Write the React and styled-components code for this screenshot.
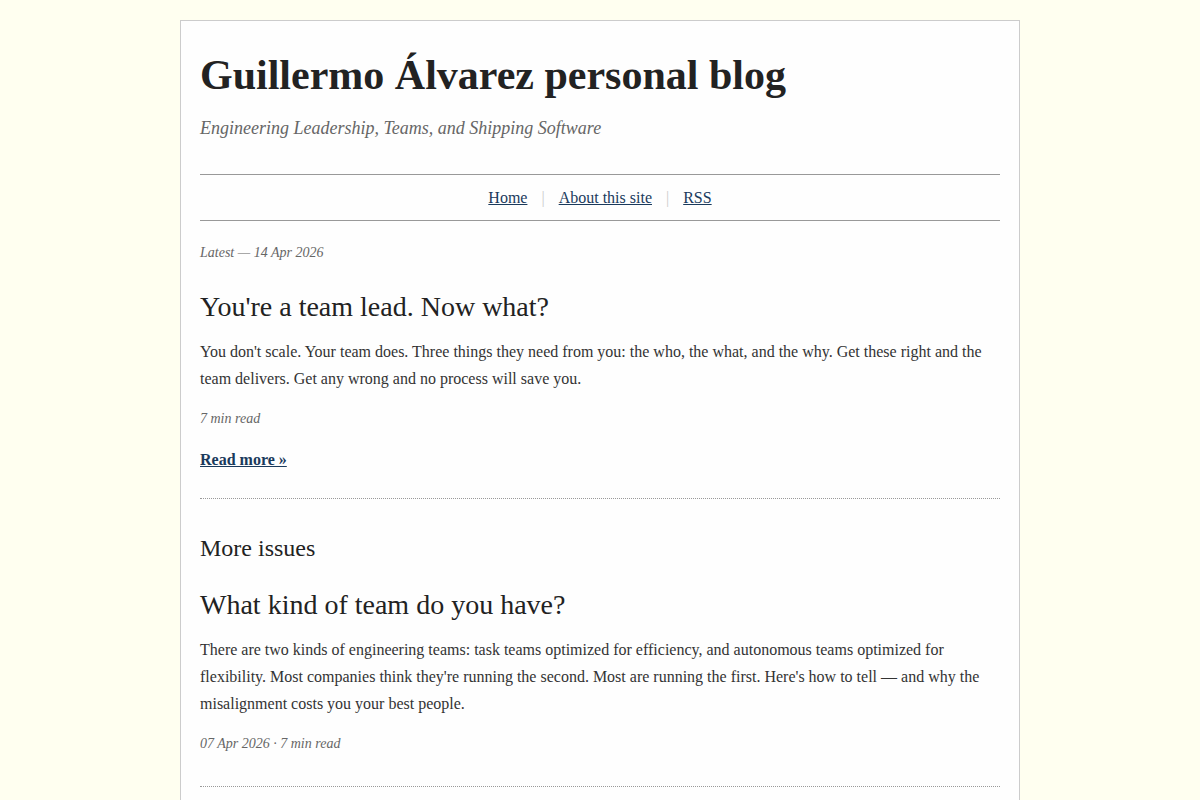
import React from "react";
import styled, { createGlobalStyle } from "styled-components";

const GlobalStyle = createGlobalStyle`
  html, body {
    margin: 0;
    padding: 0;
    background: #fffff0;
  }
  body {
    font-family: "Liberation Serif", "Times New Roman", serif;
    color: #333;
  }
`;

const posts = [
  {
    id: "team-lead",
    title: "You're a team lead. Now what?",
    excerpt:
      "You don't scale. Your team does. Three things they need from you: the who, the what, and the why. Get these right and the team delivers. Get any wrong and no process will save you.",
    meta: "7 min read",
    featured: true,
  },
  {
    id: "team-kind",
    title: "What kind of team do you have?",
    excerpt:
      "There are two kinds of engineering teams: task teams optimized for efficiency, and autonomous teams optimized for flexibility. Most companies think they're running the second. Most are running the first. Here's how to tell — and why the misalignment costs you your best people.",
    meta: "07 Apr 2026 · 7 min read",
  },
];

function Post({ post }) {
  return (
    <Article $featured={post.featured}>
      <PostTitle $featured={post.featured}>{post.title}</PostTitle>
      <Excerpt>{post.excerpt}</Excerpt>
      <Meta>{post.meta}</Meta>
      {post.featured && <ReadMore href="#">Read more »</ReadMore>}
    </Article>
  );
}

export default function App() {
  const [latest, ...rest] = posts;
  return (
    <>
      <GlobalStyle />
      <Sheet>
        <Header>
          <SiteTitle>Guillermo Álvarez personal blog</SiteTitle>
          <Tagline>Engineering Leadership, Teams, and Shipping Software</Tagline>
        </Header>
        <Nav>
          <NavLink href="#">Home</NavLink>
          <Sep>|</Sep>
          <NavLink href="#">About this site</NavLink>
          <Sep>|</Sep>
          <NavLink href="#">RSS</NavLink>
        </Nav>
        <main>
          <Latest>Latest — 14 Apr 2026</Latest>
          <Post post={latest} />
          <SectionHeading>More issues</SectionHeading>
          {rest.map((p) => (
            <Post key={p.id} post={p} />
          ))}
        </main>
      </Sheet>
    </>
  );
}

const Sheet = styled.div`
  box-sizing: border-box;
  width: 840px;
  margin: 20px auto 0;
  padding: 29px 19px 40px;
  background: #fefefe;
  border: 1px solid #ccc;
`;

const Header = styled.header`
  display: flex;
  flex-direction: column;
`;

const SiteTitle = styled.h1`
  margin: 0;
  font-size: 42px;
  line-height: 1.2;
  font-weight: bold;
  color: #222;
`;

const Tagline = styled.p`
  margin: 16px 0 0;
  font-size: 18px;
  line-height: 1.4;
  font-style: italic;
  color: #666;
`;

const Nav = styled.nav`
  margin-top: 32px;
  padding: 9px 0 8px;
  border-top: 1px solid #999;
  border-bottom: 1px solid #999;
  text-align: center;
  font-size: 16px;
  line-height: 28px;
`;

const NavLink = styled.a`
  color: #1a3a5c;
  text-decoration: underline;
`;

const Sep = styled.span`
  margin: 0 14px;
  color: #ccc;
`;

const Latest = styled.p`
  margin: 20px 0 0;
  font-size: 14px;
  line-height: 1.7;
  font-style: italic;
  color: #666;
`;

const Article = styled.article`
  padding-bottom: ${(p) => (p.$featured ? "25px" : "30px")};
  border-bottom: 1px dotted #999;
`;

const PostTitle = styled.h2`
  margin: ${(p) => (p.$featured ? "26px" : "25px")} 0 0;
  font-size: 28px;
  line-height: 1.2;
  font-weight: normal;
  color: #222;
`;

const Excerpt = styled.p`
  margin: 14px 0 0;
  font-size: 16px;
  line-height: 1.7;
  color: #333;
`;

const Meta = styled.p`
  margin: 15px 0 0;
  font-size: 14px;
  line-height: 1.7;
  font-style: italic;
  color: #666;
`;

const ReadMore = styled.a`
  display: inline-block;
  margin-top: 15px;
  font-size: 16px;
  line-height: 1.7;
  font-weight: bold;
  color: #1a3a5c;
`;

const SectionHeading = styled.h2`
  margin: 35px 0 0;
  font-size: 24px;
  line-height: 1.2;
  font-weight: normal;
  color: #222;
`;
